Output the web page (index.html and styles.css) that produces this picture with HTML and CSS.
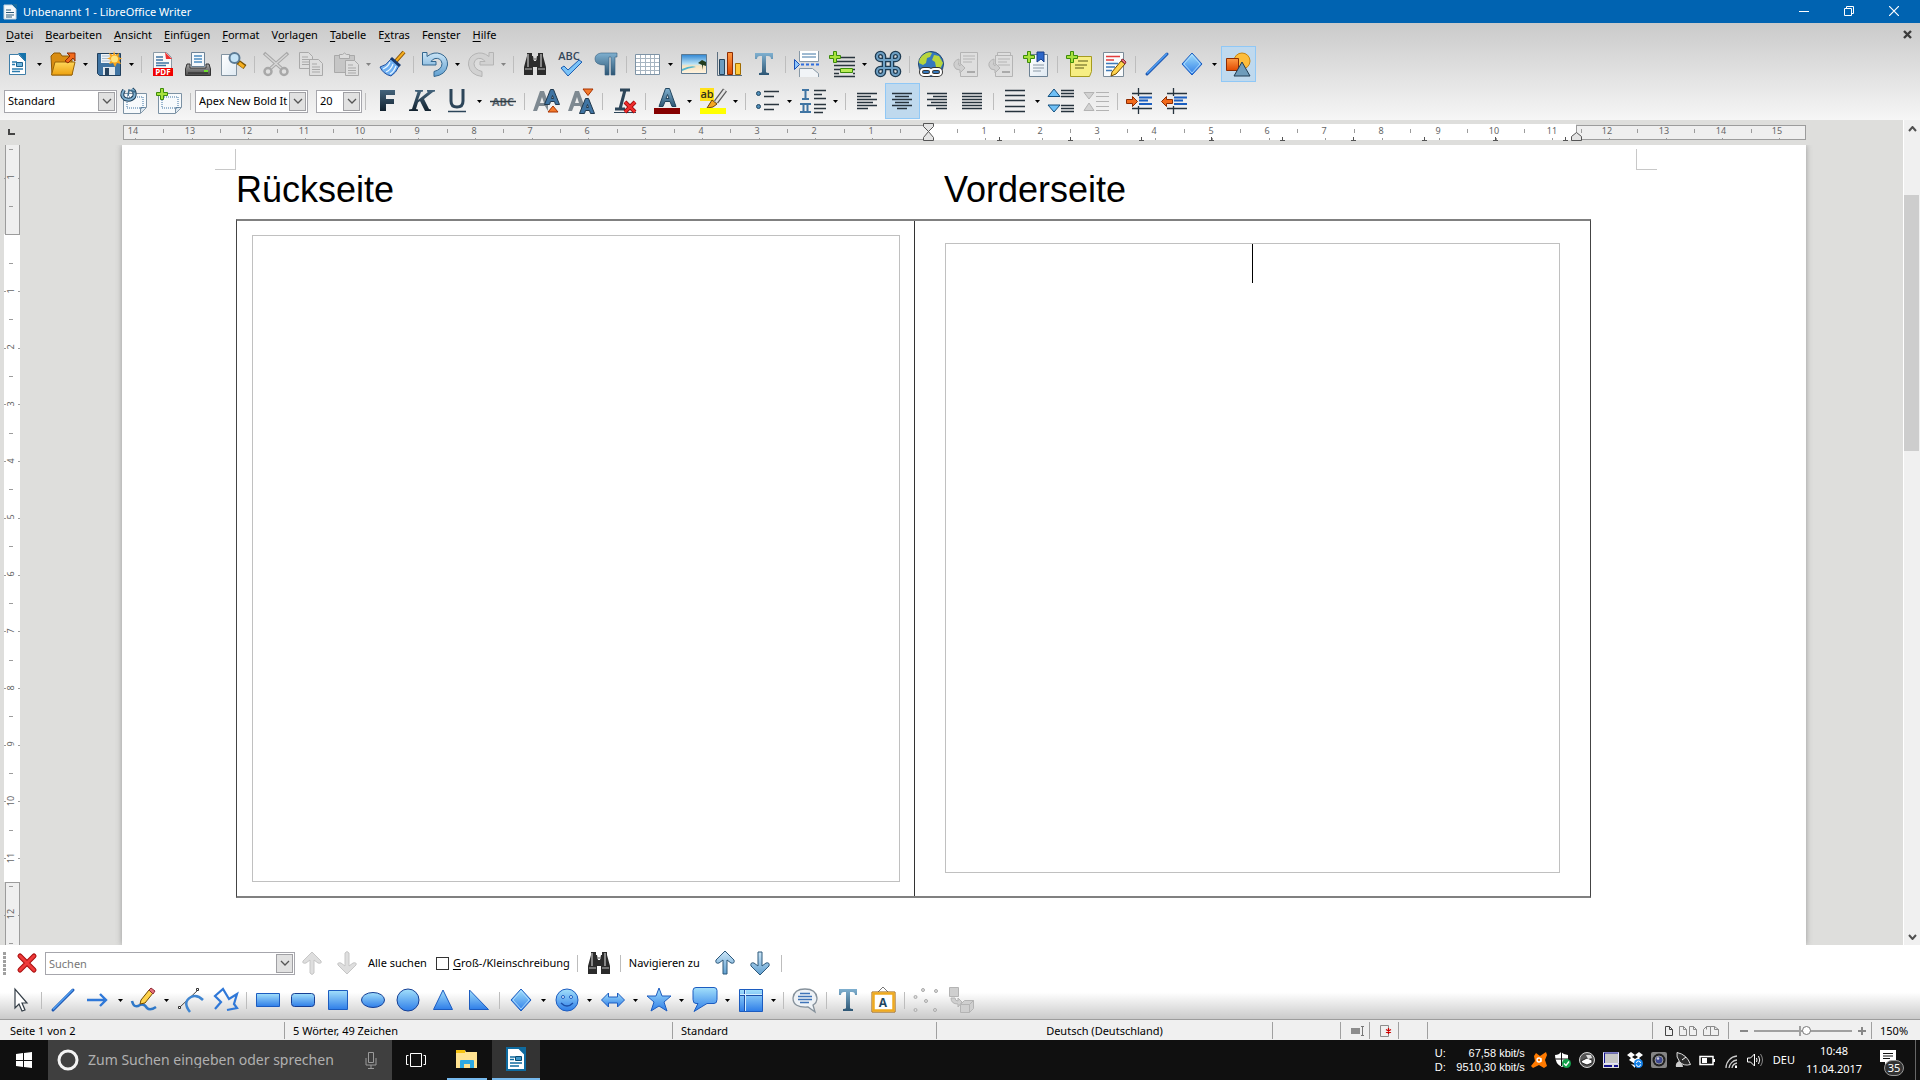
FILE: index.html
```html
<!DOCTYPE html>
<html lang="de">
<head>
<meta charset="utf-8">
<title>Unbenannt 1 - LibreOffice Writer</title>
<link rel="stylesheet" href="styles.css">
</head>
<body>
<svg class="defs" width="0" height="0" aria-hidden="true">
  <defs>
    <linearGradient id="blue" x2="0" y2="1"><stop stop-color="#a3e0fb"/><stop offset="1" stop-color="#2e7de8"/></linearGradient>
    <linearGradient id="steel" x2="0" y2="1"><stop stop-color="#7fb0d0"/><stop offset="1" stop-color="#2d5674"/></linearGradient>
    <linearGradient id="dark" x2="0" y2="1"><stop stop-color="#44647c"/><stop offset="1" stop-color="#12222f"/></linearGradient>
    <linearGradient id="paper" x2="1" y2="1"><stop stop-color="#fff"/><stop offset="1" stop-color="#dfe9f2"/></linearGradient>
    <linearGradient id="gold" x2="0" y2="1"><stop stop-color="#ffd75a"/><stop offset="1" stop-color="#eda10f"/></linearGradient>
    <linearGradient id="orange" x2="0" y2="1"><stop stop-color="#ff9a45"/><stop offset="1" stop-color="#e04a00"/></linearGradient>
    <linearGradient id="metal" x2="0" y2="1"><stop stop-color="#a8a8a8"/><stop offset="1" stop-color="#4a4a4a"/></linearGradient>
    <linearGradient id="sky" x2="0" y2="1"><stop stop-color="#2f86d4"/><stop offset=".5" stop-color="#b8e2f6"/><stop offset=".6" stop-color="#f6e3c0"/><stop offset="1" stop-color="#fff3df"/></linearGradient>
    <linearGradient id="ice" x2="0" y2="1"><stop stop-color="#cde6f7"/><stop offset="1" stop-color="#5f9fd0"/></linearGradient>
    <symbol id="caret" viewBox="0 0 5 3"><path d="M0 0h5L2.500 3z"/></symbol>
    <symbol id="chevron" viewBox="0 0 10 6"><path d="M1 1l4 4 4-4" fill="none" stroke="#555" stroke-width="1.300"/></symbol>
    <symbol id="plus" viewBox="0 0 12 12"><path d="M4.500.5h3v4h4v3h-4v4h-3v-4h-4v-3h4z" fill="#a8e23c" stroke="#3c8c0a"/></symbol>
    <symbol id="binoculars" viewBox="0 0 26 26"><path d="M5 2h5v3h1l1 5h2l1-5h1V2h5v3l3 11v8h-9v-8h-4v8H2v-8L5 5z" fill="#2b2b2b"/><path d="M6 3v13M19 3v13" stroke="#888" stroke-width="2"/><path d="M3 18h7M16 18h7M11 8h4" stroke="#8c8c8c" stroke-width="1.500"/></symbol>
    <symbol id="bigT" viewBox="0 0 26 26"><path d="M4 2h18v6h-2q0-3-3-3h-2v16q0 1 3 1v2H8v-2q3 0 3-1V5H9Q6 5 6 8H4z" fill="url(#steel)"/></symbol>
    <symbol id="line" viewBox="0 0 26 26"><path d="M3 23L23 3" stroke="#1b55b0" stroke-width="3" stroke-linecap="round"/><path d="M3 22.500L23 2.500" stroke="#4d9cf0" stroke-width="1.600"/></symbol>
    <symbol id="diamond" viewBox="0 0 26 26"><path d="M13 2l10 11-10 11L3 13z" fill="url(#blue)" stroke="#1c5cc0"/><path d="M13 4l8 9-8 9-8-9z" fill="none" stroke="#b7e2ff" stroke-width=".8"/></symbol>
  </defs>
</svg>

<div class="app">
  <header class="titlebar">
    <svg class="app-icon" width="14" height="16" viewBox="0 0 14 16"><path d="M1 1h8l4 4v10H1z" fill="#f5f8fa" stroke="#c7d5df"/><path d="M9 0h5v5z" fill="#1d6d9e"/><path d="M3 6h5M3 8.500h8M3 11h8M3 13h6" stroke="#2b5878"/></svg>
    <h1 class="window-title">Unbenannt 1 - LibreOffice Writer</h1>
    <div class="window-buttons">
      <button type="button" aria-label="Minimieren"><svg width="10" height="10"><path d="M0 5.500h10" stroke="#fff"/></svg></button>
      <button type="button" aria-label="Verkleinern"><svg width="10" height="10" fill="none" stroke="#fff"><path d="M.5 2.500h7v7h-7zM2.500 2.500v-2h7v7h-2"/></svg></button>
      <button type="button" aria-label="Schließen"><svg width="10" height="10"><path d="M0 0l10 10M10 0L0 10" stroke="#fff" stroke-width="1.200"/></svg></button>
    </div>
  </header>

  <div class="command-area">
    <nav class="menubar">
      <button type="button"><u>D</u>atei</button>
      <button type="button"><u>B</u>earbeiten</button>
      <button type="button"><u>A</u>nsicht</button>
      <button type="button"><u>E</u>infügen</button>
      <button type="button"><u>F</u>ormat</button>
      <button type="button">V<u>o</u>rlagen</button>
      <button type="button"><u>T</u>abelle</button>
      <button type="button">E<u>x</u>tras</button>
      <button type="button">Fen<u>s</u>ter</button>
      <button type="button"><u>H</u>ilfe</button>
      <button type="button" class="close-doc" aria-label="Dokument schließen"><svg width="9" height="9"><path d="M1 1l7 7M8 1L1 8" stroke="#3c3c3c" stroke-width="2.400"/></svg></button>
    </nav>

    <div class="toolbar" role="toolbar" aria-label="Standard">
      <button type="button" class="tool" aria-label="Neu"><svg viewBox="0 0 26 26"><path d="M5.500 3.500h9l7 7v13h-16z" fill="#fff" stroke="#3f7ea8"/><path d="M14 2h8v9z" fill="#1673ab"/><path d="M8 11h5M8 13.500h3M8 18h11M8 20.500h8" stroke="#2b7cae" stroke-width="1.400"/><path d="M12.500 11.500h6v4h-6z" fill="#6fb4dc" stroke="#1f638e"/></svg></button><button type="button" class="drop" aria-label="Neu, Auswahl"><svg><use href="#caret"/></svg></button>
      <button type="button" class="tool" aria-label="Öffnen"><svg viewBox="0 0 26 26"><path d="M1 5l3-3h6l2 3h10v19H2z" fill="#d98d13" stroke="#8f5a06"/><path d="M5 11h20l-3 13H1.500z" fill="url(#gold)" stroke="#9a6508"/><path d="M15 10l5-5-3-3h8v8l-2-3-5 5z" fill="#f26a1b" stroke="#8d2c02"/></svg></button><button type="button" class="drop" aria-label="Öffnen, Auswahl"><svg><use href="#caret"/></svg></button>
      <button type="button" class="tool" aria-label="Speichern"><svg viewBox="0 0 26 26"><path d="M1.500 2.500h23v22h-21l-2-2z" fill="#3f74a3" stroke="#203f5c"/><path d="M5 3h15v9H5z" fill="#eef3f7"/><path d="M6 5h9M6 7.500h9M6 10h9" stroke="#a9bccb"/><path d="M7 16h12v8H7z" fill="#dfe6ec"/><path d="M9 17h4v7H9z" fill="#28445f"/><path d="M18 0l1.500 4L23 2l-.5 4 3.500 1.500L23 9l2 4-4-1-2 4-2-4-4 1 2-4-4-1.500L14.500 6 13 2l4 2z" fill="#f7a51c"/><circle cx="18.500" cy="8" r="3.500" fill="#ffe37c"/></svg></button><button type="button" class="drop" aria-label="Speichern, Auswahl"><svg><use href="#caret"/></svg></button>
      <span class="sep"></span>
      <button type="button" class="tool" aria-label="Als PDF exportieren"><svg viewBox="0 0 26 26"><path d="M3.500 1.500h13l5 5v18h-18z" fill="#f8f8f8" stroke="#8a9aa6"/><path d="M15 1l7 7h-6z" fill="#e33"/><path d="M6 6h7M6 9h7M6 12h13M6 14.500h10" stroke="#3f74a3" stroke-width="1.400"/><rect x="3" y="17" width="20" height="8" fill="#f00000"/><text x="13" y="24" class="pdf">PDF</text></svg></button>
      <button type="button" class="tool" aria-label="Drucken"><svg viewBox="0 0 26 26"><path d="M6.500 1.500h13v14h-13z" fill="#f5f9fc" stroke="#6c8296"/><path d="M9 5h8M9 8h8M9 11h8" stroke="#4b8abf" stroke-width="1.400"/><path d="M2 13h3v4h16v-4h3l1.500 5v6.500h-25V18z" fill="url(#metal)" stroke="#333"/><path d="M3 22h20" stroke="#222"/><path d="M19 20h4" stroke="#6dde2c" stroke-width="2"/></svg></button>
      <button type="button" class="tool" aria-label="Druckvorschau"><svg viewBox="0 0 26 26"><path d="M1.500 3.500h15v21h-15z" fill="url(#paper)" stroke="#8293a1"/><path d="M18 11l7 5" stroke="#7a5200" stroke-width="5"/><path d="M19 12l5 4" stroke="#f5ae1f" stroke-width="3"/><circle cx="14.500" cy="7" r="5" fill="#c5e4f7" stroke="#5c7c96" stroke-width="2"/></svg></button>
      <span class="sep"></span>
      <button type="button" class="tool" disabled aria-label="Ausschneiden"><svg viewBox="0 0 26 26" fill="none" stroke="#a8a8a8"><path d="M1 2l17 15M25 2L8 17" stroke-width="3.600"/><path d="M2 3l16 14M24 3L8 17" stroke="#d6d6d6" stroke-width="1.500"/><circle cx="5" cy="20.500" r="3.500" stroke-width="2.500"/><circle cx="21" cy="20.500" r="3.500" stroke-width="2.500"/></svg></button>
      <button type="button" class="tool" disabled aria-label="Kopieren"><svg viewBox="0 0 26 26" fill="#dedede" stroke="#a9a9a9"><path d="M1.500 1.500h9l4 4v12h-13z"/><path d="M4 6h6M4 8.500h8M4 11h8M4 13.500h8"/><path d="M11.500 8.500h9l4 4v12h-13z"/><path d="M14 13h5M14 16h8M14 18.500h8M14 21h8"/></svg></button>
      <button type="button" class="tool" disabled aria-label="Einfügen"><svg viewBox="0 0 26 26" fill="#c6c6c6" stroke="#a9a9a9"><path d="M1.500 4.500h20v17h-20z"/><path d="M6.500 7.500v-4h3q2-3 4 0h3v4z" fill="#ddd"/><path d="M12.500 9.500h9l4 4v11h-13z" fill="#dedede"/><path d="M15 14h5M15 17h8M15 19.500h8M15 22h8"/></svg></button><button type="button" class="drop" disabled aria-label="Einfügen, Auswahl"><svg><use href="#caret"/></svg></button>
      <button type="button" class="tool" aria-label="Format übertragen"><svg viewBox="0 0 26 26"><path d="M25 1l-8 9" stroke="#8a5200" stroke-width="4"/><path d="M25 1l-8 9" stroke="#f5ae1f" stroke-width="2"/><path d="M12 8l8 7q-3 7-8 10-8-2-11-9 6-1 11-8z" fill="#6fb0f2" stroke="#1f4fa0"/><path d="M11 11q-2 5-7 7M14 13q-2 6-7 8M17 15q-2 6-6 8" stroke="#eaf6ff" fill="none" stroke-width="1.200"/><path d="M12 7l9 8" stroke="#173a70" stroke-width="3"/></svg></button>
      <span class="sep"></span>
      <button type="button" class="tool" aria-label="Rückgängig"><svg viewBox="0 0 26 26"><path d="M.5 1.500h4.500v4Q12 0 19 3q7 3 6.500 11Q24 24 12 25.500v-5q8-2 8-8-1-6-7-5-3 1-4 3h5v3.500H.5z" fill="url(#ice)" stroke="#34678f"/></svg></button><button type="button" class="drop" aria-label="Rückgängig, Auswahl"><svg><use href="#caret"/></svg></button>
      <button type="button" class="tool" disabled aria-label="Wiederherstellen"><svg viewBox="0 0 26 26"><path d="M25.500 1.500H21v4Q14 0 7 3 0 6 .5 14 2 24 14 25.500v-5q-8-2-8-8 1-6 7-5 3 1 4 3h-5v3.500h13.500z" fill="#d2d2d2" stroke="#b4b4b4"/></svg></button><button type="button" class="drop" disabled aria-label="Wiederherstellen, Auswahl"><svg><use href="#caret"/></svg></button>
      <span class="sep"></span>
      <button type="button" class="tool" aria-label="Suchen und Ersetzen"><svg viewBox="0 0 26 26"><use href="#binoculars"/></svg></button>
      <button type="button" class="tool" aria-label="Rechtschreibung"><svg viewBox="0 0 26 26"><text x="12" y="9" class="abc">ABC</text><path d="M4 17l3-2 4 4L22 9l3 2-14 14z" fill="#7cc4f8" stroke="#1c5cb0"/></svg></button>
      <button type="button" class="tool" aria-label="Formatierungszeichen"><svg viewBox="0 0 26 26"><path d="M9 2h16v4h-2v18h-4V6h-2v18h-4V14Q3 14 3 8q0-5 6-6z" fill="url(#steel)" stroke="#35607f" stroke-width=".6"/></svg></button>
      <span class="sep"></span>
      <button type="button" class="tool" aria-label="Tabelle"><svg viewBox="0 0 26 26"><path d="M.5 3.500h24v20H.5z" fill="#fff" stroke="#7d93a5"/><path d="M1 7.500h23M1 11.500h23M1 15.500h23M1 19.500h23M5.500 4v19M10.500 4v19M15.500 4v19M19.500 4v19" stroke="#a7b5c1"/></svg></button><button type="button" class="drop" aria-label="Tabelle, Auswahl"><svg><use href="#caret"/></svg></button>
      <button type="button" class="tool" aria-label="Bild"><svg viewBox="0 0 26 26"><path d="M.5 3.500h25v19H.5z" fill="url(#sky)" stroke="#5d7a92"/><path d="M1 18q9-4 14-2-8 1-14 4z" fill="#4fb6cf"/><path d="M17 12l4-3 4 2v4l-3-1-1 5v-5z" fill="#223c1d"/></svg></button>
      <button type="button" class="tool" aria-label="Diagramm"><svg viewBox="0 0 26 26"><path d="M1.500 1v23.500H26" fill="none" stroke="#5c6f80"/><path d="M3.500 8.500h5v15h-5z" fill="#6b9cc0" stroke="#25435c"/><path d="M11.500 1.500h5v22h-5z" fill="url(#orange)" stroke="#8d2c02"/><path d="M19.500 12.500h5v11h-5z" fill="#ffc83a" stroke="#a06b00"/></svg></button>
      <button type="button" class="tool" aria-label="Textfeld"><svg viewBox="0 0 26 26"><use href="#bigT"/></svg></button>
      <span class="sep"></span>
      <button type="button" class="tool" aria-label="Seitenumbruch"><svg viewBox="0 0 26 26"><path d="M5.500 0v10.500h19V0" fill="#fff" stroke="#8798a6"/><path d="M8 3h14M8 6h14" stroke="#3f74a3"/><path d="M.5 8.500l5 5-5 5z" fill="#8ec5fb" stroke="#1a4fb5"/><path d="M7 13.500h19" stroke="#2f6fe0" stroke-width="2" stroke-dasharray="3 2"/><path d="M5.500 26v-8.500h13l6 5V26" fill="#f1f4f7" stroke="#8798a6"/></svg></button>
      <button type="button" class="tool" aria-label="Feldbefehl"><svg viewBox="0 0 26 26"><path d="M12 6.500h14M7 10.500h19M5 14.500h21M5 18.500h6M24 18.500h2M5 22.500h5M24 22.500h2M5 25.500h21" stroke="#2a353e" stroke-width="1.400"/><path d="M11.500 17.500h12v4h-12z" fill="#b9ec55" stroke="#3c8c0a"/><use href="#plus" width="12" height="12"/></svg></button><button type="button" class="drop" aria-label="Feldbefehl, Auswahl"><svg><use href="#caret"/></svg></button>
      <button type="button" class="tool" aria-label="Sonderzeichen"><svg viewBox="0 0 26 26" fill="none"><path d="M9 9V5.500A3.500 3.500 0 1 0 5.500 9h15A3.500 3.500 0 1 0 17 5.500v15a3.500 3.500 0 1 0 3.500-3.500h-15A3.500 3.500 0 1 0 9 20.500z" stroke="#1e3b52" stroke-width="4.600"/><path d="M9 9V5.500A3.500 3.500 0 1 0 5.500 9h15A3.500 3.500 0 1 0 17 5.500v15a3.500 3.500 0 1 0 3.500-3.500h-15A3.500 3.500 0 1 0 9 20.500z" stroke="#6fa0c4" stroke-width="2"/></svg></button>
      <span class="sep"></span>
      <button type="button" class="tool" aria-label="Hyperlink"><svg viewBox="0 0 26 26"><circle cx="13" cy="13" r="12.500" fill="#3478bd" stroke="#20456c"/><path d="M5 4q5-4 9-2l-2 4-3 1-1 5-3 2-4-2q0-5 4-8zM16 4l5 1 4 7-3 6-4-2-1-5-3-2z" fill="#b9d63c"/><g fill="none"><rect x="3" y="18" width="10" height="6" rx="3" stroke="#333" stroke-width="4"/><rect x="13" y="18" width="10" height="6" rx="3" stroke="#333" stroke-width="4"/><rect x="3" y="18" width="10" height="6" rx="3" stroke="#fff" stroke-width="2"/><rect x="13" y="18" width="10" height="6" rx="3" stroke="#fff" stroke-width="2"/></g></svg></button>
      <button type="button" class="tool" disabled aria-label="Fußnote"><svg viewBox="0 0 26 26" fill="#dedede" stroke="#b4b4b4"><path d="M7.500 1.500h17v24h-17z"/><path d="M10 5h12M10 8h12M10 11h9"/><path d="M14 21h8" stroke="#999" stroke-width="1.500"/><path d="M6 8q-6 2-5 7 1 4 6 4v3l5-5-5-5v3q-3-1-1-4z" fill="#cfcfcf"/></svg></button>
      <button type="button" class="tool" disabled aria-label="Endnote"><svg viewBox="0 0 26 26" fill="#dedede" stroke="#b4b4b4"><path d="M9.500 1.500h13v19h-13z"/><path d="M7.500 4.500h17v21h-17z"/><path d="M10 8h12M10 11h9M10 14h12"/><path d="M14 21h8" stroke="#999" stroke-width="1.500"/><path d="M6 8q-6 2-5 7 1 4 6 4v3l5-5-5-5v3q-3-1-1-4z" fill="#cfcfcf"/></svg></button>
      <button type="button" class="tool" aria-label="Lesezeichen"><svg viewBox="0 0 26 26"><path d="M6.500 3.500h18v22h-18z" fill="url(#paper)" stroke="#6d8294"/><path d="M10 14h11M10 17h11M10 20h8" stroke="#8a98a5"/><path d="M14 1h7v10l-3-3-4 3z" fill="#2c66c9" stroke="#183f88"/><use href="#plus" width="12" height="12"/></svg></button>
      <span class="sep"></span>
      <button type="button" class="tool" aria-label="Kommentar"><svg viewBox="0 0 26 26"><path d="M4.500 5.500h21v15l-2 5h-19z" fill="#f7ee83" stroke="#a59b1f"/><path d="M12 10h10M9 14h12M9 17h9" stroke="#8e8a3d" stroke-width="1.300"/><use href="#plus" width="12" height="12"/></svg></button>
      <button type="button" class="tool" aria-label="Änderungen"><svg viewBox="0 0 26 26"><path d="M2.500 1.500h20v24h-20z" fill="#f9fbfc" stroke="#7b8b98"/><path d="M5 5.500h14M5 9h8" stroke="#e23b3b" stroke-width="1.500"/><path d="M5 12.500h12M5 16h9M5 19.500h6" stroke="#3f7ab8" stroke-width="1.300"/><path d="M11 21l9-11 4 3-9 10-5 2z" fill="#ffd34c" stroke="#6f4a00"/><path d="M20 9l2-1 3 3-1 2z" fill="#e6717b" stroke="#902c36"/></svg></button>
      <span class="sep"></span>
      <button type="button" class="tool" aria-label="Linie"><svg viewBox="0 0 26 26"><use href="#line"/></svg></button>
      <button type="button" class="tool" aria-label="Formen"><svg viewBox="0 0 26 26"><use href="#diamond"/></svg></button><button type="button" class="drop" aria-label="Formen, Auswahl"><svg><use href="#caret"/></svg></button>
      <button type="button" class="tool active" aria-pressed="true" aria-label="Zeichenfunktionen anzeigen"><svg viewBox="0 0 26 26"><circle cx="17" cy="10" r="8" fill="#fdbd3c" stroke="#c88410"/><path d="M1.500 7.500h12v12h-12z" fill="url(#orange)" stroke="#8d2c02"/><path d="M17 11l8 14H9z" fill="#6f9cbb" stroke="#213c52"/></svg></button>
    </div>

    <div class="toolbar format" role="toolbar" aria-label="Formatierung">
      <div class="combo"><select aria-label="Absatzvorlage"><option>Standard</option></select><span class="combo-arrow"><svg width="10" height="6"><use href="#chevron"/></svg></span></div>
      <button type="button" class="tool" aria-label="Vorlage aktualisieren"><svg viewBox="0 0 26 26"><path d="M2.500 5.500h23v14l-6 6h-17z" fill="#f7fafc" stroke="#7c92a4"/><path d="M19.500 25v-5.500H25" fill="#dce6ee" stroke="#7c92a4"/><path d="M6 9h16v11H6z" fill="none" stroke="#3f74a3" stroke-dasharray="1 1"/><path d="M3 2q-4 6 1 9 6 2 9-2 2-5-2-8" fill="none" stroke="#20405a" stroke-width="4"/><path d="M3 2q-4 6 1 9 6 2 9-2 2-5-2-8" fill="none" stroke="#7fb0d0" stroke-width="2"/><path d="M7 8l1-6 6 2" fill="none" stroke="#3c6c8c" stroke-width="1.500"/></svg></button>
      <button type="button" class="tool" aria-label="Neue Vorlage"><svg viewBox="0 0 26 26"><path d="M2.500 5.500h23v14l-6 6h-17z" fill="#f7fafc" stroke="#7c92a4"/><path d="M19.500 25v-5.500H25" fill="#dce6ee" stroke="#7c92a4"/><path d="M6 9h16v11H6z" fill="none" stroke="#3f74a3" stroke-dasharray="1 1"/><use href="#plus" width="12" height="12"/></svg></button>
      <span class="sep"></span>
      <div class="combo"><select aria-label="Schriftname"><option>Apex New Bold It</option></select><span class="combo-arrow"><svg width="10" height="6"><use href="#chevron"/></svg></span></div>
      <div class="combo size"><select aria-label="Schriftgröße"><option>20</option></select><span class="combo-arrow"><svg width="10" height="6"><use href="#chevron"/></svg></span></div>
      <span class="sep"></span>
      <button type="button" class="tool" aria-label="Fett"><svg viewBox="0 0 26 26"><path d="M6 2h15v5h-9v4h8v5h-8v7H6z" fill="url(#dark)"/></svg></button>
      <button type="button" class="tool" aria-label="Kursiv"><svg viewBox="0 0 26 26"><path d="M6 2h8v1.500l-2 .5-3 8 10-8-1-.5V2h8v1.500l-2 .5-9 7 5 10 2 .5V23h-6l-5-10-2 1.500L7 21l2 .5V23H0v-1.500l3-.5L8.500 4 6 3.500z" fill="url(#dark)"/></svg></button>
      <button type="button" class="tool" aria-label="Unterstrichen"><svg viewBox="0 0 26 26"><path d="M7 1v12q0 6 6 6t6-6V1" fill="none" stroke="#2c4559" stroke-width="3"/><path d="M4 23.500h18" stroke="#2c4559" stroke-width="1.500"/></svg></button><button type="button" class="drop" aria-label="Unterstrichen, Auswahl"><svg><use href="#caret"/></svg></button>
      <button type="button" class="tool" aria-label="Durchgestrichen"><svg viewBox="0 0 26 26"><text x="13" y="18" class="strike">ABC</text><path d="M0 13.500h26" stroke="#2f3c46" stroke-width="1.500"/></svg></button>
      <span class="sep"></span>
      <button type="button" class="tool" aria-label="Schrift vergrößern"><svg viewBox="0 0 26 26"><path d="M0 23L7 3h4l4 11v9l-3-5H6l-2 5zm7-8h4L9 9z" fill="#7e8991"/><path d="M11.500 16.500l6-15h3l6 15h-4l-1-3h-4l-1 3zm7-6h2l-1-3z" fill="#3f74a3" stroke="#20384d"/><path d="M20 18l5 6H15z" fill="#f47a2c" stroke="#a83200"/></svg></button>
      <button type="button" class="tool" aria-label="Schrift verkleinern"><svg viewBox="0 0 26 26"><path d="M0 23L7 3h4l4 11v9l-3-5H6l-2 5zm7-8h4L9 9z" fill="#7e8991"/><path d="M11.500 25.500l6-15h3l6 15h-4l-1-3h-4l-1 3zm7-6h2l-1-3z" fill="#3f74a3" stroke="#20384d"/><path d="M20 7.500l5-6.500H15z" fill="#f47a2c" stroke="#a83200"/></svg></button>
      <span class="sep"></span>
      <button type="button" class="tool" aria-label="Formatierung löschen"><svg viewBox="0 0 26 26"><path d="M9 2h10M14 2L9 21M4 21h10" stroke="#2c4559" stroke-width="3"/><path d="M3 24.500h22" stroke="#2c4559"/><path d="M14 14l10 10M24 14L14 24" stroke="#8b0000" stroke-width="4"/><path d="M14 14l10 10M24 14L14 24" stroke="#ee2c2c" stroke-width="2.500"/></svg></button>
      <span class="sep"></span>
      <button type="button" class="tool" aria-label="Schriftfarbe"><svg viewBox="0 0 26 26"><path d="M5 18.500l6.500-18h4l6.500 18h-4l-2-5h-5l-2 5zm7-8h3l-1.500-4z" fill="url(#steel)" stroke="#23465f"/><rect y="20" width="26" height="6" fill="#850000"/></svg></button><button type="button" class="drop" aria-label="Schriftfarbe, Auswahl"><svg><use href="#caret"/></svg></button>
      <button type="button" class="tool" aria-label="Zeichenhintergrund"><svg viewBox="0 0 26 26"><rect width="14" height="13" fill="#ffe11a"/><text x="7" y="10" class="ab">ab</text><path d="M25 2l-9 12" stroke="#5a5a5a" stroke-width="5"/><path d="M25 2l-9 12" stroke="#e2e2e2" stroke-width="2.500"/><path d="M12 12l5 4-4 3-6 1z" fill="#f5a623" stroke="#6a4400"/><rect y="20" width="26" height="6" fill="#ff0"/></svg></button><button type="button" class="drop" aria-label="Zeichenhintergrund, Auswahl"><svg><use href="#caret"/></svg></button>
      <span class="sep"></span>
      <button type="button" class="tool" aria-label="Aufzählung"><svg viewBox="0 0 26 26"><circle cx="4.500" cy="5.500" r="2" fill="#4f8db8" stroke="#1f4763"/><circle cx="4.500" cy="18.500" r="2" fill="#4f8db8" stroke="#1f4763"/><path d="M10 3.500h15M10 8.500h10M10 16.500h15M10 21.500h10" stroke="#2a353e" stroke-width="1.400"/></svg></button><button type="button" class="drop" aria-label="Aufzählung, Auswahl"><svg><use href="#caret"/></svg></button>
      <button type="button" class="tool" aria-label="Nummerierung"><svg viewBox="0 0 26 26"><path d="M2 2h7M5.500 2v9M2 11h7M0 16h11M3.500 16v8M7.500 16v8M0 24h11" stroke="#3f74a3" stroke-width="2"/><path d="M14 2.500h12M14 6.500h8M14 10.500h12M14 16.500h12M14 20.500h12M14 24.500h9" stroke="#2a353e" stroke-width="1.400"/></svg></button><button type="button" class="drop" aria-label="Nummerierung, Auswahl"><svg><use href="#caret"/></svg></button>
      <span class="sep"></span>
      <button type="button" class="tool" aria-label="Linksbündig"><svg viewBox="0 0 26 26"><path d="M3 5.500h20M3 8.500h14M3 11.500h20M3 14.500h16M3 17.500h20M3 20.500h11" stroke="#26333d" stroke-width="1.400"/></svg></button>
      <button type="button" class="tool active" aria-pressed="true" aria-label="Zentriert"><svg viewBox="0 0 26 26"><path d="M3 5.500h20M6 8.500h14M3 11.500h20M6 14.500h14M3 17.500h20M8 20.500h10" stroke="#26333d" stroke-width="1.400"/></svg></button>
      <button type="button" class="tool" aria-label="Rechtsbündig"><svg viewBox="0 0 26 26"><path d="M3 5.500h20M9 8.500h14M3 11.500h20M7 14.500h16M3 17.500h20M12 20.500h11" stroke="#26333d" stroke-width="1.400"/></svg></button>
      <button type="button" class="tool" aria-label="Blocksatz"><svg viewBox="0 0 26 26"><path d="M3 5.500h20M3 8.500h20M3 11.500h20M3 14.500h20M3 17.500h20M3 20.500h20" stroke="#26333d" stroke-width="1.400"/></svg></button>
      <span class="sep"></span>
      <button type="button" class="tool" aria-label="Zeilenabstand"><svg viewBox="0 0 26 26"><path d="M3 2.500h20M3 7.500h20M3 12.500h20M3 18.500h20M3 23.500h20" stroke="#26333d" stroke-width="1.400"/></svg></button><button type="button" class="drop" aria-label="Zeilenabstand, Auswahl"><svg><use href="#caret"/></svg></button>
      <button type="button" class="tool" aria-label="Abstand erhöhen"><svg viewBox="0 0 26 26"><path d="M0 8.500L6 1l6 7.500zM0 17l6 7 6-7z" fill="#6fc0f6" stroke="#14507e"/><path d="M13 2.500h13M13 5.500h13M13 8.500h13M13 17.500h13M13 20.500h13M13 23.500h13" stroke="#26333d" stroke-width="1.400"/></svg></button>
      <button type="button" class="tool" disabled aria-label="Abstand verringern"><svg viewBox="0 0 26 26" fill="#d2d2d2" stroke="#b3b3b3"><path d="M1 4.500h10L6 11zM1 22.500h10L6 15z"/><path d="M13 4.500h13M13 8.500h13M13 13.500h13M13 18.500h13M13 22.500h13"/></svg></button>
      <span class="sep"></span>
      <button type="button" class="tool" aria-label="Einzug erhöhen"><svg viewBox="0 0 26 26"><path d="M6 5.500h20M6 20.500h20M12.500 0v8M12.500 18v8" stroke="#26333d" stroke-width="1.300"/><path d="M13 9.500h13M13 12.500h9M13 16h13" stroke="#1b5fc0" stroke-width="1.800"/><path d="M.5 11.500h6v-3l5 5-5 5v-3h-6z" fill="#f26a1b" stroke="#8d2c02"/></svg></button>
      <button type="button" class="tool" aria-label="Einzug verringern"><svg viewBox="0 0 26 26"><path d="M6 5.500h20M6 20.500h20M12.500 0v8M12.500 18v8" stroke="#26333d" stroke-width="1.300"/><path d="M13 9.500h13M13 12.500h9M13 16h13" stroke="#1b5fc0" stroke-width="1.800"/><path d="M11.500 11.500h-6v-3l-5 5 5 5v-3h6z" fill="#f26a1b" stroke="#8d2c02"/></svg></button>
    </div>
  </div>

  <main class="workspace">
    <div class="ruler-row">
      <svg class="tab-kind" width="7" height="6"><path d="M1 0v5h6" fill="none" stroke="#444" stroke-width="2"/></svg>
      <svg class="ruler-h" height="20" role="img" aria-label="Horizontales Lineal">
        <path d="M806 4h648v16h-648z" fill="#fff"/>
        <path d="M1 5h805v14H1zM1454 5h229v14h-229z" class="outside"/>
        <path class="tick" d="M41 9v4M98 9v4M155 9v4M211 9v4M268 9v4M325 9v4M381 9v4M438 9v4M495 9v4M552 9v4M608 9v4M665 9v4M722 9v4M778 9v4M835 9v4M892 9v4M948 9v4M1005 9v4M1062 9v4M1118 9v4M1175 9v4M1232 9v4M1288 9v4M1345 9v4M1402 9v4M1459 9v4M1515 9v4M1572 9v4M1629 9v4"/>
        <path class="tick" d="M13 18v2M70 18v2M126 18v2M183 18v2M240 18v2M296 18v2M353 18v2M410 18v2M466 18v2M523 18v2M580 18v2M637 18v2M693 18v2M750 18v2M863 18v2M920 18v2M977 18v2M1033 18v2M1090 18v2M1147 18v2M1203 18v2M1260 18v2M1317 18v2M1374 18v2M1430 18v2M1487 18v2M1544 18v2M1600 18v2M1657 18v2"/>
        <path class="tab" d="M875 20h5M877 17v3M946 20h5M948 17v3M1017 20h5M1019 17v3M1087 20h5M1089 17v3M1158 20h5M1160 17v3M1229 20h5M1231 17v3M1300 20h5M1302 17v3M1371 20h5M1373 17v3M1441 20h5M1443 17v3"/>
        <g class="num">
          <text x="11" y="14">14</text><text x="68" y="14">13</text><text x="125" y="14">12</text><text x="182" y="14">11</text><text x="238" y="14">10</text><text x="295" y="14">9</text><text x="352" y="14">8</text><text x="408" y="14">7</text><text x="465" y="14">6</text><text x="522" y="14">5</text><text x="579" y="14">4</text><text x="635" y="14">3</text><text x="692" y="14">2</text><text x="749" y="14">1</text>
          <text x="862" y="14">1</text><text x="918" y="14">2</text><text x="975" y="14">3</text><text x="1032" y="14">4</text><text x="1089" y="14">5</text><text x="1145" y="14">6</text><text x="1202" y="14">7</text><text x="1259" y="14">8</text><text x="1316" y="14">9</text><text x="1372" y="14">10</text><text x="1430" y="14">11</text><text x="1485" y="14">12</text><text x="1542" y="14">13</text><text x="1599" y="14">14</text><text x="1655" y="14">15</text>
        </g>
        <path class="handle" d="M801.500 3.500h10v3l-5 5-5-5zM801.500 20.500v-3l5-6 5 6v3zM1449.500 20.500v-4l5-4 5 4v4z"/>
      </svg>
    </div>

    <div class="canvas">
      <svg class="ruler-v" width="16" role="img" aria-label="Vertikales Lineal">
        <path d="M0 89h16v648H0z" fill="#fff"/>
        <path class="outside" d="M1-2h14v91H1zM1 737h14v1000H1z"/>
        <path class="tick" d="M5 4h4M5 61h4M5 118h4M5 174h4M5 231h4M5 288h4M5 344h4M5 401h4M5 458h4M5 515h4M5 571h4M5 628h4M5 685h4M5 741h4M5 798h4"/>
        <path class="tick" d="M0 33h2M14 33h2M0 146h2M14 146h2M0 203h2M14 203h2M0 259h2M14 259h2M0 316h2M14 316h2M0 373h2M14 373h2M0 430h2M14 430h2M0 486h2M14 486h2M0 543h2M14 543h2M0 600h2M14 600h2M0 656h2M14 656h2M0 713h2M14 713h2M0 770h2M14 770h2"/>
        <g class="num">
          <text transform="translate(10 32) rotate(-90)">1</text><text transform="translate(10 146) rotate(-90)">1</text><text transform="translate(10 202) rotate(-90)">2</text><text transform="translate(10 259) rotate(-90)">3</text><text transform="translate(10 316) rotate(-90)">4</text><text transform="translate(10 372) rotate(-90)">5</text><text transform="translate(10 429) rotate(-90)">6</text><text transform="translate(10 486) rotate(-90)">7</text><text transform="translate(10 543) rotate(-90)">8</text><text transform="translate(10 599) rotate(-90)">9</text><text transform="translate(10 656) rotate(-90)">10</text><text transform="translate(10 713) rotate(-90)">11</text><text transform="translate(10 769) rotate(-90)">12</text>
        </g>
      </svg>
      <article class="sheet">
        <div class="margin-marks"><span class="mark-left"></span><span class="mark-right"></span></div>
        <div class="headings"><h2>Rückseite</h2><h2>Vorderseite</h2></div>
        <div class="cards">
          <section class="card back" aria-label="Rückseite"><div class="frame"></div></section>
          <section class="card front" aria-label="Vorderseite"><div class="frame"><span class="text-cursor"></span></div></section>
        </div>
      </article>
    </div>

    <div class="scrollbar">
      <button type="button" aria-label="Nach oben"><svg width="9" height="6"><path d="M1 5l3.500-4L8 5" fill="none" stroke="#505050" stroke-width="2"/></svg></button>
      <div class="track"><div class="thumb"></div></div>
      <button type="button" aria-label="Nach unten"><svg width="9" height="6"><path d="M1 1l3.500 4L8 1" fill="none" stroke="#505050" stroke-width="2"/></svg></button>
    </div>
  </main>

  <form class="findbar">
    <span class="grip"></span>
    <button type="button" class="tool" aria-label="Suchleiste schließen"><svg viewBox="0 0 26 26"><path d="M6 6l14 14M20 6L6 20" stroke="#a80d0d" stroke-width="5" stroke-linecap="round"/><path d="M6 6l14 14M20 6L6 20" stroke="#ee3a3a" stroke-width="3" stroke-linecap="round"/></svg></button>
    <div class="combo search"><input type="text" placeholder="Suchen" aria-label="Suchen"><button type="button" class="combo-arrow" aria-label="Suchverlauf"><svg width="10" height="6"><use href="#chevron"/></svg></button></div>
    <button type="button" class="tool" disabled aria-label="Vorheriges"><svg viewBox="0 0 26 26"><path d="M13 2l9 9q1 3-3 2l-4-3v13q-2 3-4 0V10l-4 3q-4 1-3-2z" fill="#dedede" stroke="#c6c6c6"/></svg></button>
    <button type="button" class="tool" disabled aria-label="Nächstes"><svg viewBox="0 0 26 26"><path d="M13 24l9-9q1-3-3-2l-4 3V3q-2-3-4 0v13l-4-3q-4-1-3 2z" fill="#dedede" stroke="#c6c6c6"/></svg></button>
    <button type="button" class="text-button">Alle suchen</button>
    <label class="check"><input type="checkbox"><span><u>G</u>roß-/Kleinschreibung</span></label>
    <span class="sep wide"></span>
    <button type="button" class="tool" aria-label="Suchen und Ersetzen"><svg viewBox="0 0 26 26"><use href="#binoculars"/></svg></button>
    <span class="sep"></span>
    <span class="nav-label">Navigieren zu</span>
    <button type="button" class="tool" aria-label="Zurück"><svg viewBox="0 0 26 26"><path d="M13 1l9 9q1 4-3 3l-4-3v14h-4V10l-4 3q-4 1-3-3z" fill="url(#ice)" stroke="#2d587a"/></svg></button>
    <button type="button" class="tool" aria-label="Weiter"><svg viewBox="0 0 26 26"><path d="M13 25l9-9q1-4-3-3l-4 3V2h-4v14l-4-3q-4-1-3 3z" fill="url(#ice)" stroke="#2d587a"/></svg></button>
    <span class="sep"></span>
  </form>

  <div class="toolbar drawbar" role="toolbar" aria-label="Zeichnung">
    <button type="button" class="tool" aria-label="Auswahl"><svg viewBox="0 0 26 26"><path d="M8 2v19l4-4 3 7 3-1-3-7h5z" fill="#fff" stroke="#333d46" stroke-width="1.200"/></svg></button>
    <span class="sep"></span>
    <button type="button" class="tool" aria-label="Linie"><svg viewBox="0 0 26 26"><use href="#line"/></svg></button>
    <button type="button" class="tool" aria-label="Pfeil"><svg viewBox="0 0 26 26"><path d="M2 13h19M15 7l6 6-6 6" fill="none" stroke="#2f78d8" stroke-width="2.400"/></svg></button><button type="button" class="drop" aria-label="Pfeil, Auswahl"><svg><use href="#caret"/></svg></button>
    <button type="button" class="tool" aria-label="Freihandlinie"><svg viewBox="0 0 26 26"><path d="M1 14q2 8 8 4 4-2 7 3 3 3 9-1" fill="none" stroke="#2f78c8" stroke-width="2.500"/><path d="M10 13l8-10 4 3-8 10-5 1z" fill="#ffd34c" stroke="#6f4a00"/><path d="M18 3l2-2 4 3-2 3z" fill="#e6717b" stroke="#902c36"/></svg></button><button type="button" class="drop" aria-label="Freihandlinie, Auswahl"><svg><use href="#caret"/></svg></button>
    <button type="button" class="tool" aria-label="Kurve"><svg viewBox="0 0 26 26"><path d="M3 20L21 3" stroke="#444"/><path d="M1.500 19.500h2v2h-2zM19.500 1.500h2v2h-2z" fill="#fff" stroke="#333"/><path d="M13 25Q5 15 14 10q6-3 12 3" fill="none" stroke="#3f85d0" stroke-width="2.500"/></svg></button>
    <button type="button" class="tool" aria-label="Polygon"><svg viewBox="0 0 26 26"><path d="M3 22l6-7-6-6 8-7 6 10 8-5-3 10 3 4-10 2" fill="none" stroke="#2f78d8" stroke-width="2.200"/></svg></button>
    <span class="sep"></span>
    <button type="button" class="tool" aria-label="Rechteck"><svg viewBox="0 0 26 26"><path d="M1.500 6.500h23v13h-23z" fill="url(#blue)" stroke="#1c5cc0"/></svg></button>
    <button type="button" class="tool" aria-label="Rechteck, abgerundet"><svg viewBox="0 0 26 26"><rect x="1.500" y="6.500" width="23" height="13" rx="3" fill="url(#blue)" stroke="#163f94"/></svg></button>
    <button type="button" class="tool" aria-label="Quadrat"><svg viewBox="0 0 26 26"><path d="M3.500 3.500h19v19h-19z" fill="url(#blue)" stroke="#1c5cc0"/></svg></button>
    <button type="button" class="tool" aria-label="Ellipse"><svg viewBox="0 0 26 26"><ellipse cx="13" cy="13" rx="11.500" ry="7.500" fill="url(#blue)" stroke="#163f94"/></svg></button>
    <button type="button" class="tool" aria-label="Kreis"><svg viewBox="0 0 26 26"><circle cx="13" cy="13" r="11" fill="url(#blue)" stroke="#163f94"/></svg></button>
    <button type="button" class="tool" aria-label="Dreieck"><svg viewBox="0 0 26 26"><path d="M13 3l9.500 19.500h-19z" fill="url(#blue)" stroke="#1c5cc0"/></svg></button>
    <button type="button" class="tool" aria-label="Rechtwinkliges Dreieck"><svg viewBox="0 0 26 26"><path d="M4.500 3l19 19.500h-19z" fill="url(#blue)" stroke="#1c5cc0"/></svg></button>
    <span class="sep"></span>
    <button type="button" class="tool" aria-label="Standardformen"><svg viewBox="0 0 26 26"><use href="#diamond"/></svg></button><button type="button" class="drop" aria-label="Standardformen, Auswahl"><svg><use href="#caret"/></svg></button>
    <button type="button" class="tool" aria-label="Symbolformen"><svg viewBox="0 0 26 26"><circle cx="13" cy="13" r="11" fill="url(#blue)" stroke="#1c5cc0"/><circle cx="9" cy="10" r="1.500" fill="#e6f6ff" stroke="#1c5cc0"/><circle cx="17" cy="10" r="1.500" fill="#e6f6ff" stroke="#1c5cc0"/><path d="M7 16q6 6 12 0" fill="none" stroke="#1c4fa8" stroke-width="1.400"/></svg></button><button type="button" class="drop" aria-label="Symbolformen, Auswahl"><svg><use href="#caret"/></svg></button>
    <button type="button" class="tool" aria-label="Blockpfeile"><svg viewBox="0 0 26 26"><path d="M1.500 13l7-7v4h9V6l7 7-7 7v-4h-9v4z" fill="url(#blue)" stroke="#1c5cc0"/></svg></button><button type="button" class="drop" aria-label="Blockpfeile, Auswahl"><svg><use href="#caret"/></svg></button>
    <button type="button" class="tool" aria-label="Sterne"><svg viewBox="0 0 26 26"><path d="M13 1l3 8h9l-7 6 3 9-8-5-8 5 3-9-7-6h9z" fill="url(#blue)" stroke="#1c5cc0"/></svg></button><button type="button" class="drop" aria-label="Sterne, Auswahl"><svg><use href="#caret"/></svg></button>
    <button type="button" class="tool" aria-label="Legenden"><svg viewBox="0 0 26 26"><path d="M4 .5h18q3 0 3 3v9q0 4-3 4h-7l-13 8 4-8H4q-3 0-3-4v-9q0-3 3-3z" fill="url(#blue)" stroke="#1c5cc0"/></svg></button><button type="button" class="drop" aria-label="Legenden, Auswahl"><svg><use href="#caret"/></svg></button>
    <button type="button" class="tool" aria-label="Flussdiagramm"><svg viewBox="0 0 26 26"><path d="M1.500 2.500h23v22h-23z" fill="url(#blue)" stroke="#1c5cc0"/><path d="M6.500 3v21M2 8.500h22" stroke="#1c4fa8"/><path d="M7.500 3v21M2 7.500h22" stroke="#d2efff"/></svg></button><button type="button" class="drop" aria-label="Flussdiagramm, Auswahl"><svg><use href="#caret"/></svg></button>
    <span class="sep"></span>
    <button type="button" class="tool" aria-label="Textlegende"><svg viewBox="0 0 26 26"><path d="M13 2q11 0 12 9 0 5-4 7l2 7-7-5Q1 21 1 11 2 2 13 2z" fill="#eef2f6" stroke="#85919b" stroke-width="1.300"/><path d="M8 6.500h10M6 9.500h14M6 12.500h14M8 15.500h9" stroke="#3f74b8" stroke-width="1.300"/></svg></button>
    <span class="sep"></span>
    <button type="button" class="tool" aria-label="Textfeld"><svg viewBox="0 0 26 26"><use href="#bigT"/></svg></button>
    <button type="button" class="tool" aria-label="Fontwork"><svg viewBox="0 0 26 26"><path d="M8 5l5-5 5 5" fill="none" stroke="#777"/><path d="M2 5h23v20H2z" fill="#fff" stroke="#9a5a00"/><path d="M3.500 6.500h20v17h-20z" fill="none" stroke="#efaa1f" stroke-width="2.500"/><text x="13" y="20" class="framed">A</text></svg></button>
    <span class="sep"></span>
    <button type="button" class="tool" disabled aria-label="Punkte bearbeiten"><svg viewBox="0 0 26 26" fill="#ddd" stroke="#aaa"><circle cx="10" cy="3" r="1.500"/><circle cx="23" cy="4" r="1.500"/><circle cx="2.500" cy="10" r="1.500"/><circle cx="13" cy="14" r="1.500"/><circle cx="2.500" cy="23" r="1.500"/><circle cx="22" cy="23" r="1.500"/></svg></button>
    <button type="button" class="tool" disabled aria-label="Extrusion"><svg viewBox="0 0 26 26" fill="#cfcfcf" stroke="#b4b4b4"><path d="M1.500.5h9v9h-9z"/><path d="M3 11q0 6 7 6v3l4-5-4-4v3q-3 0-3-3z"/><path d="M12.500 17.500l4-4h9v8l-4 4h-9zM12.500 17.500h9v8M21.500 17.500l4-4"/></svg></button>
  </div>

  <footer class="statusbar">
    <span>Seite 1 von 2</span>
    <span>5 Wörter, 49 Zeichen</span>
    <span>Standard</span>
    <span class="mid">Deutsch (Deutschland)</span>
    <span></span>
    <span class="glyph"><svg width="13" height="10"><path d="M0 2h9v6H0z" fill="#8c8c8c"/><path d="M10 .5h3M11.500 0v10M10 9.500h3" stroke="#777"/></svg></span>
    <span class="glyph"><svg width="12" height="12"><path d="M8.500 3V.5h-8v11h8V9" fill="none" stroke="#8c8c8c"/><path d="M8.500 3v6M6 4.500l5 3M11 4.500l-5 3" stroke="#c00" stroke-width="1.200"/></svg></span>
    <span></span>
    <span></span>
    <span class="views"><svg width="56" height="10" fill="none"><path d="M1.500.5h4l3 3v6h-7zM5.500.5v3h3" stroke="#444"/><path d="M15.500.5h4l3 3v6h-7zM19.500.5v3h3M25.500.5h4l3 3v6h-7zM29.500.5v3h3M39.500 3.500l3-3h4v9h-7zM42.500.5v3M46.500.5h4l4 3v6h-8zM50.500.5v3h4" stroke="#888"/></svg></span>
    <span class="zoom"><button type="button" aria-label="Verkleinern"><svg width="8" height="8"><path d="M0 4h8" stroke="#888" stroke-width="2"/></svg></button><input type="range" min="0" max="100" value="54" aria-label="Zoom"><button type="button" aria-label="Vergrößern"><svg width="8" height="8"><path d="M0 4h8M4 0v8" stroke="#888" stroke-width="2"/></svg></button></span>
    <span>150%</span>
  </footer>

  <div class="taskbar">
    <button type="button" class="start" aria-label="Start"><svg width="16" height="16"><path d="M0 2l7-1v7H0zM8 1l8-1v8H8zM0 9h7v6l-7-1zM8 9h8v7l-8-1z" fill="#fff"/></svg></button>
    <label class="cortana">
      <svg width="22" height="22"><circle cx="11" cy="11" r="9" fill="none" stroke="#f2f2f2" stroke-width="3"/></svg>
      <input type="text" placeholder="Zum Suchen eingeben oder sprechen" aria-label="Windows durchsuchen">
      <svg width="12" height="17" fill="none" stroke="#9b9b9b"><path d="M3.500.5h5v10h-5zM1 6v7h10V6M6 13v3M3 16.500h6"/></svg>
    </label>
    <button type="button" class="task" aria-label="Taskansicht"><svg width="20" height="14" fill="none" stroke="#fff"><path d="M4.500.5h11v13h-11zM2.500 2.500h-2v9h2M17.500 2.500h2v9h-2"/></svg></button>
    <button type="button" class="task open" aria-label="Explorer"><svg width="22" height="18"><path d="M0 0h9l1 2h11v16H0z" fill="#ffe391"/><path d="M0 0h9v3H0z" fill="#f5c211"/><path d="M4 18v-7q0-1 1-1h12q1 0 1 1v7h-4v-4H8v4z" fill="#2ea9e3"/></svg></button>
    <button type="button" class="task open current" aria-label="LibreOffice Writer"><svg width="20" height="24"><path d="M1 1h12l6 6v16H1z" fill="#fff" stroke="#0f6ba0" stroke-width="2"/><path d="M13 0h7v8z" fill="#0f6ba0"/><path d="M4 10h5M4 12.500h4M4 16h12M4 19h9" stroke="#0f6ba0" stroke-width="1.400"/><path d="M9.500 9.500h6v4h-6z" fill="#3d95c8" stroke="#064a72"/></svg></button>
    <div class="netmeter"><span>U:</span><span>67,58 kbit/s</span><span>D:</span><span>9510,30 kbit/s</span></div>
    <div class="tray">
      <svg viewBox="0 0 16 16"><path d="M5 1l4 3 6-4 1 3-2 5 2 6-3 2-5-3-6 3-2-2 4-5-1-5z" fill="#ff7a00"/><circle cx="8" cy="8" r="2" fill="none" stroke="#fff" stroke-width="1.400"/><path d="M10 6v4" stroke="#fff"/></svg>
      <svg viewBox="0 0 16 16"><path d="M0 3q4 0 6-3 3 3 7 3v4q0 6-6 8-7-3-7-12z" fill="#fff"/><path d="M6.500 0v14M0 7h13" stroke="#111"/><circle cx="11.500" cy="11.500" r="4.500" fill="#12a04a"/><path d="M9 11.500l2 2 3-4" fill="none" stroke="#fff" stroke-width="1.300"/></svg>
      <svg viewBox="0 0 16 16"><circle cx="8" cy="8" r="7.500" fill="#555" stroke="#d7d7d7"/><path d="M2 9l6-3 5 2v3l-5 2-5-2z" fill="#fff" stroke="#222"/><path d="M7 3h5l1 3-4 1z" fill="#ddd"/></svg>
      <svg viewBox="0 0 16 16"><path d="M.5.5h15v11H.5z" fill="#c6c6c6" stroke="#e4e4ff"/><path d="M1 1h14M1.500 1v10" stroke="#12128c"/><path d="M0 12h16v4H0z" fill="#ddd"/><path d="M1 13h8v2H1zM11 13h4v2h-4z" fill="#12128c"/></svg>
      <svg viewBox="0 0 16 16"><path d="M4 0l4 3 4-3 4 3-4 3 2 2-6 4-6-4 2-2-4-3zM4 12l4 1v3z" fill="#fff"/><path d="M8 3l3 2-3 2-3-2z" fill="#111"/><circle cx="11.500" cy="11.500" r="4.500" fill="#1380e8"/><path d="M9.500 11a2 2 0 0 1 4 0M9.500 12.500a2 2 0 0 0 4 0" stroke="#fff" fill="none"/></svg>
      <svg viewBox="0 0 16 16"><rect x="0" y="0" width="16" height="16" rx="2" fill="#858585"/><circle cx="8" cy="8" r="6.500" fill="#222"/><circle cx="8" cy="8" r="4" fill="#3d4890" stroke="#999"/><circle cx="7" cy="6.500" r="1.300" fill="#ccd"/></svg>
      <svg viewBox="0 0 16 16"><path d="M2 .5q10 2 13.500 12-7 2-11-3Q1 5 2 .5z" fill="#2a2a2a" stroke="#ddd"/><path d="M4 9q-4 2-3 6h7q0-3-4-6z" fill="#ccc"/><path d="M7 8l4-3" stroke="#fff"/></svg>
      <svg viewBox="0 0 16 16"><path d="M1 4.500h13v8H1z" fill="none" stroke="#fff" stroke-width="1.500"/><path d="M3 6h5v5H3z" fill="#fff"/><path d="M15 7v3" stroke="#fff" stroke-width="2"/></svg>
      <svg viewBox="0 0 16 16" fill="none" stroke="#ccc"><path d="M3 16A12 12 0 0 1 14 4M6 16a9 9 0 0 1 8-8M9 16a6 6 0 0 1 5-5" stroke-width="1.300"/><path d="M12 15h2" stroke="#fff" stroke-width="3"/></svg>
      <svg viewBox="0 0 16 16" fill="none" stroke="#fff"><path d="M.5 6h3l4-4v12l-4-4h-3zM9.500 6q1 2 0 4M11.500 4q2.500 4 0 8"/><path d="M13.500 2q4 6 0 12" stroke="#888"/></svg>
    </div>
    <span class="lang">DEU</span>
    <div class="clock"><time>10:48</time><time>11.04.2017</time></div>
    <button type="button" class="notify" aria-label="Info-Center"><svg width="17" height="16"><path d="M0 0h16v12H9l-4 4v-4H0z" fill="#fff"/><path d="M3 3.500h10M3 6h10M3 8.500h7" stroke="#111"/></svg><span class="badge">35</span></button>
    <span class="peek"></span>
  </div>
</div>
</body>
</html>
```
FILE: styles.css
```css
* { box-sizing: border-box; }

body {
  margin: 0;
  font: 11px/16px "Noto Sans", "Open Sans", sans-serif;
  color: #000;
}

button, input, select {
  font: inherit;
  color: inherit;
  margin: 0;
  padding: 0;
  border: 0;
  background: none;
}

svg { display: block; }
.defs { position: absolute; }

.app {
  display: flex;
  flex-direction: column;
  height: 100vh;
  overflow: hidden;
}

/* Title bar */
.titlebar {
  flex: none;
  display: flex;
  align-items: center;
  height: 23px;
  padding-left: 3px;
  background: #0063b1;
  color: #fff;
}
.window-title {
  flex: 1;
  margin: 0 0 0 6px;
  font-size: 11px;
  font-weight: 400;
}
.window-buttons {
  display: flex;
  align-self: flex-start;
  height: 21px;
  padding-right: 4px;
}
.window-buttons button {
  display: grid;
  place-items: center;
  width: 45px;
}

/* Menu and toolbars */
.command-area {
  flex: none;
  background: linear-gradient(#cacaca, #f6f6f6);
  height: 97px;
}
.menubar {
  display: flex;
  height: 23px;
}
.menubar button { padding: 0 6px; }
.menubar u { text-underline-offset: 2px; }
.menubar .close-doc { margin-left: auto; padding-right: 8px; }

.toolbar {
  display: flex;
  align-items: center;
  height: 36px;
}
.tool {
  flex: none;
  display: grid;
  place-items: center;
  width: 35px;
  height: 36px;
  padding-right: 1px;
}
.tool svg { width: 26px; height: 26px; overflow: visible; }
.tool.active {
  background: #bfd9ee;
  border: 1px solid #90c8f6;
}
.drop {
  flex: none;
  width: 11px;
  height: 36px;
  padding-left: 2px;
}
.drop svg { width: 5px; height: 3px; }
.drop:disabled { opacity: .4; }
.sep {
  flex: none;
  width: 8px;
  height: 17px;
  background: linear-gradient(#bdbdbd, #bdbdbd) 3px 0 / 1px 100% no-repeat;
}
.format {
  margin-top: 1px;
  padding-left: 4px;
}

.pdf, .abc, .strike, .ab, .framed {
  font-family: "Open Sans", sans-serif;
  font-weight: 700;
  text-anchor: middle;
}
.pdf { font-size: 8px; fill: #fff; }
.abc { font-size: 11px; font-weight: 600; fill: #33475a; }
.strike { font-size: 11px; fill: #56616a; }
.ab { font-size: 11px; font-weight: 600; fill: #33301a; }
.framed { font-size: 12px; fill: #1e4560; }

.combo {
  position: relative;
  flex: none;
  width: 113px;
  height: 23px;
  background: #fff;
  border: 1px solid #a6a6ac;
}
.combo.size { width: 46px; margin-left: 8px; }
.combo select, .combo input {
  width: 100%;
  height: 21px;
  padding: 0 18px 0 3px;
  appearance: none;
  outline: 0;
}
.combo-arrow {
  position: absolute;
  top: 1px;
  right: 1px;
  display: grid;
  place-items: center;
  width: 17px;
  height: 19px;
  background: #e1e1e1;
  border: 1px solid #a0a0a4;
  pointer-events: none;
}

/* Document area */
.workspace {
  flex: 1;
  min-height: 0;
  display: grid;
  grid-template: 25px 1fr / 1fr 17px;
  background: #dededc;
}
.ruler-row {
  display: flex;
  align-items: flex-start;
  min-width: 0;
  overflow: hidden;
}
.tab-kind { margin: 9px 107px 0 8px; flex: none; }
.ruler-h { flex: 1; height: 25px; min-width: 0; }
.outside { fill: #efefef; stroke: #9c9c9c; shape-rendering: crispEdges; }
.tick { stroke: #9c9c9c; fill: none; shape-rendering: crispEdges; }
.tab { stroke: #555; fill: none; shape-rendering: crispEdges; }
.handle { fill: #e4e4e4; stroke: #555; }
.num text {
  font-size: 9px;
  fill: #666;
  text-anchor: middle;
}

.canvas {
  grid-row: 2;
  display: flex;
  min-width: 0;
  min-height: 0;
  overflow: hidden;
  padding: 0 97px 0 4px;
}
.ruler-v { flex: none; height: 100%; margin-right: 102px; }
.sheet {
  flex: 1;
  min-width: 0;
  padding: 4px 149px 0 93px;
  background: #fff;
  box-shadow: 0 0 6px #999;
}
.margin-marks {
  display: flex;
  justify-content: space-between;
}
.mark-left, .mark-right {
  width: 21px;
  height: 21px;
  border-bottom: 1px solid #c8c8c8;
}
.mark-left { border-right: 1px solid #c8c8c8; }
.mark-right { border-left: 1px solid #c8c8c8; }
.headings {
  display: grid;
  grid-template-columns: 1fr 1fr;
  padding: 0 5px 0 21px;
}
.headings h2 {
  margin: 0;
  font: 400 36px/40px "Liberation Sans", Arial, sans-serif;
}
.cards {
  display: grid;
  grid-template-columns: 1fr 1fr;
  height: 679px;
  margin: 9px 66px 0 21px;
  border: solid #444;
  border-width: 2px 1px;
  border-block-color: #808080;
}
.card { display: flex; }
.card + .card { border-left: 1px solid #333; }
.back { padding: 14px 14px 14px 15px; }
.front { padding: 22px 30px 23px 30px; }
.frame {
  flex: 1;
  border: 1px solid #c0c0c0;
  text-align: center;
}
.text-cursor {
  display: inline-block;
  width: 1px;
  height: 39px;
  background: #000;
}

.scrollbar {
  grid-column: 2;
  grid-row: 1 / 3;
  display: flex;
  flex-direction: column;
  background: #f0f0f0;
  border-left: 1px solid #fff;
}
.scrollbar button {
  display: grid;
  place-items: center;
  height: 17px;
}
.track { flex: 1; padding: 58px 1px 0 0; }
.thumb { height: 256px; background: #cdcdcd; }

/* Find bar */
.findbar {
  flex: none;
  display: flex;
  align-items: center;
  height: 36px;
  padding-left: 3px;
}
.grip {
  width: 3px;
  height: 23px;
  margin-right: 4px;
  background: repeating-linear-gradient(#a0a0a0 0 3px, #fff 3px 4px);
}
.search { width: 250px; }
.search input::placeholder { color: #777; opacity: 1; }
.text-button { padding: 0 3px; margin-right: 6px; }
.check { display: flex; align-items: center; gap: 4px; }
.check input {
  width: 13px;
  height: 13px;
  appearance: none;
  border: 1px solid #333;
  background: #fff;
}
.check u { text-underline-offset: 2px; }
.sep.wide { margin-left: 4px; }
.nav-label { padding: 0 8px 0 4px; }

.drawbar {
  flex: none;
  height: 38px;
  padding-left: 3px;
  background: linear-gradient(#fff 30%, #cacaca);
}

/* Status bar */
.statusbar {
  flex: none;
  display: grid;
  grid-template-columns: 285px 388px 264px 336px 68px 29px 29px 29px 1fr 76px 143px 48px;
  height: 21px;
  padding: 2px 0 1px;
  background: #f0f0f0;
  border-top: 1px solid #9c9c9c;
}
.statusbar > span {
  display: flex;
  align-items: center;
  padding-left: 8px;
  border-right: 1px solid #a0a0a0;
}
.statusbar > span:first-child { padding-left: 10px; }
.statusbar > span:last-child { border: 0; }
.statusbar > .mid { justify-content: center; padding: 0; }
.statusbar > .glyph { padding-left: 10px; }
.statusbar > .views { padding-left: 11px; }
.statusbar > .zoom { gap: 6px; padding-left: 11px; }
.zoom input {
  width: 98px;
  height: 12px;
  appearance: none;
  background:
    linear-gradient(#a0a0a0, #a0a0a0) 45px 1px / 2px 10px no-repeat,
    linear-gradient(#a0a0a0, #a0a0a0) 0 5px / 100% 2px no-repeat;
}
.zoom input::-webkit-slider-thumb {
  appearance: none;
  width: 9px;
  height: 9px;
  border: 1px solid #777;
  border-radius: 50%;
  background: #fff;
}

/* Windows taskbar */
.taskbar {
  flex: none;
  display: flex;
  align-items: center;
  height: 40px;
  background: #101010;
  color: #fff;
}
.start {
  display: grid;
  place-items: center;
  width: 48px;
  height: 40px;
}
.cortana {
  display: flex;
  align-items: center;
  gap: 9px;
  width: 344px;
  height: 40px;
  padding: 0 15px 0 9px;
  background: #3f3f3f;
}
.cortana input { flex: 1; min-width: 0; font-size: 14px; }
.cortana input::placeholder { color: #b0b0b0; opacity: 1; }
.task {
  display: grid;
  place-items: center;
  width: 40px;
  height: 40px;
  margin: 0 4px;
}
.task.open { margin: 0 4px 0 7px; border-bottom: 2px solid #76b9ed; }
.task.open.current { width: 48px; margin: 0 0 0 1px; background: #333; }
.netmeter {
  display: grid;
  grid-template-columns: 12px 78px;
  margin: 0 6px 0 auto;
  font: 11px/14px "Liberation Sans", Arial, sans-serif;
  white-space: nowrap;
}
.netmeter span:nth-child(even) { text-align: right; }
.tray { display: flex; gap: 8px; }
.tray svg { width: 16px; height: 16px; }
.lang { margin-left: 10px; }
.clock {
  display: flex;
  flex-direction: column;
  align-items: center;
  width: 78px;
  line-height: 18px;
}
.notify {
  position: relative;
  width: 42px;
  height: 40px;
  padding: 0 0 4px 7px;
}
.badge {
  position: absolute;
  left: 11px;
  top: 20px;
  width: 20px;
  height: 16px;
  border: 1px solid #999;
  border-radius: 8px;
  background: #333;
  line-height: 14px;
  text-align: center;
}
.peek {
  width: 5px;
  height: 40px;
  border-left: 1px solid #666;
}
```
